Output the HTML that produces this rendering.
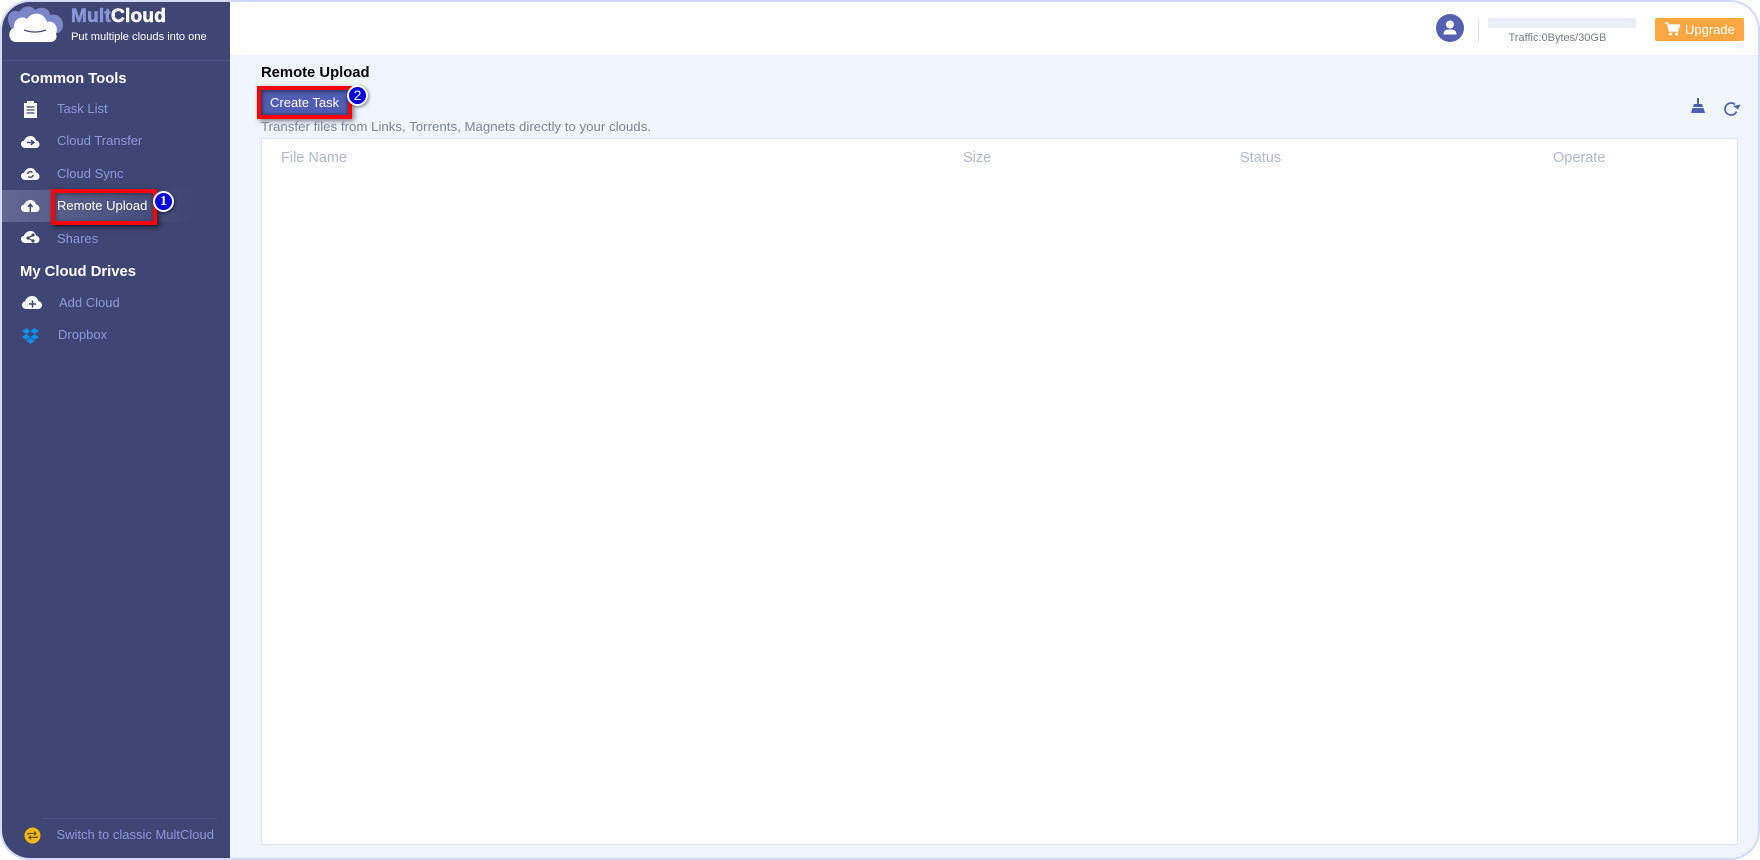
<!DOCTYPE html>
<html><head><meta charset="utf-8"><style>
html,body{margin:0;padding:0;width:1760px;height:860px;overflow:hidden;background:#fff;font-family:"Liberation Sans",sans-serif}
.a{position:absolute;white-space:nowrap}
#f{position:absolute;left:0;top:0;width:1760px;height:860px;overflow:hidden}
#frame{position:absolute;left:0;top:0;width:1756px;height:856px;border:2px solid #d3daf8;border-radius:30px;overflow:hidden;background:#f0f5fe}
.nav{font-size:13px;color:#8d97d8;line-height:16px}
.hd{font-size:14.800px;font-weight:bold;color:#fff;line-height:18px}
.th{font-size:14.500px;color:#b2b9cb;line-height:18px}
svg{position:absolute;display:block}
</style></head><body><div id="f">
<div id="frame">
<div class="a" style="left:0;top:0;width:228px;height:856px;background:#3f4674"></div>
<div class="a" style="left:228px;top:0;width:1530px;height:53px;background:#fff"></div>
<div class="a" style="left:0;top:58px;width:228px;height:1px;background:#4a5285"></div>
<div class="a" style="left:0;top:188px;width:228px;height:32px;background:linear-gradient(90deg,#626892,#3f4674 85%)"></div>
<div class="a" style="left:40px;top:816px;width:175px;height:1px;background:#4a5285"></div>
<div class="a" style="left:259px;top:136px;width:1475px;height:705px;background:#fff;border:1px solid #dbe5f7"></div>
</div>
<!-- logo -->
<svg style="left:6px;top:4px" width="60" height="40" viewBox="0 0 60 40"><path d="M2 15C2 8 9 5 13 8C17 1 26 1 29 6C36 1 44 5 44 11C51 9 57 14 57 21C57 26 54 29 51 29L10 29C6 26 2 21 2 15Z" fill="#7b86c9"/><path d="M10 38C2 38 1 26 8 24C7 15 16 11 21 15C26 7 38 8 41 18C48 16 53 23 50 30C52 35 48 38 44 38Z" fill="#fff"/><path d="M18 26Q29 30 40 26" stroke="#3f4674" stroke-width="1.200" fill="none"/></svg>
<div class="a" style="left:71px;top:5px;font-size:19px;font-weight:bold;line-height:24px;letter-spacing:.25px;color:#8a94d6;-webkit-text-stroke:.6px #8a94d6">Mult<span style="color:#fff;-webkit-text-stroke:.6px #fff">Cloud</span></div>
<div class="a" style="left:71px;top:29.500px;font-size:11.100px;color:#fff;line-height:15px">Put multiple clouds into one</div>
<!-- nav -->
<div class="a hd" style="left:20px;top:70px">Common Tools</div>
<svg style="left:23px;top:101px" width="15" height="17" viewBox="0 0 15 17"><path d="M1 2h3V0h7v2h3v15H1z" fill="#fff"/><path d="M3.500 6h8M3.500 9h8M3.500 12h8" stroke="#3f4674" stroke-width="1.200"/></svg>
<div class="a nav" style="left:57px;top:101px">Task List</div>
<svg style="left:21px;top:136px" width="19" height="12" viewBox="0 0 19 12"><path d="M4.500 12C1.500 12 0 10 0 8C0 6 1.500 5 3 4.800C4 2 6.500 0 9.500 0C12.500 0 14.500 2 15 4.500C17 5 18.500 6.500 18.500 8.500C18.500 10.500 17 12 15 12Z" fill="#fff"/><path d="M6 6.500h6M10 4.200l2.800 2.300-2.800 2.300" stroke="#3f4674" stroke-width="1.500" fill="none"/></svg>
<div class="a nav" style="left:57px;top:133px">Cloud Transfer</div>
<svg style="left:21px;top:168px" width="19" height="12" viewBox="0 0 19 12"><path d="M4.500 12C1.500 12 0 10 0 8C0 6 1.500 5 3 4.800C4 2 6.500 0 9.500 0C12.500 0 14.500 2 15 4.500C17 5 18.500 6.500 18.500 8.500C18.500 10.500 17 12 15 12Z" fill="#fff"/><path d="M6.500 6a3 3 0 0 1 5-1.500M12.200 7a3 3 0 0 1-5 1.500" stroke="#3f4674" stroke-width="1.500" fill="none"/></svg>
<div class="a nav" style="left:57px;top:166px">Cloud Sync</div>
<svg style="left:21px;top:200px" width="19" height="12" viewBox="0 0 19 12"><path d="M4.500 12C1.500 12 0 10 0 8C0 6 1.500 5 3 4.800C4 2 6.500 0 9.500 0C12.500 0 14.500 2 15 4.500C17 5 18.500 6.500 18.500 8.500C18.500 10.500 17 12 15 12Z" fill="#fff"/><path d="M9.300 12V5M7 7l2.300-2.800L11.600 7" stroke="#3f4674" stroke-width="1.500" fill="none"/></svg>
<div class="a nav" style="left:57px;top:198px;color:#fff">Remote Upload</div>
<svg style="left:21px;top:231px" width="19" height="12" viewBox="0 0 19 12"><path d="M4.500 12C1.500 12 0 10 0 8C0 6 1.500 5 3 4.800C4 2 6.500 0 9.500 0C12.500 0 14.500 2 15 4.500C17 5 18.500 6.500 18.500 8.500C18.500 10.500 17 12 15 12Z" fill="#fff"/><path d="M12 4L7 7l5 3" stroke="#3f4674" stroke-width="1.200" fill="none"/><circle cx="7" cy="7" r="1.600" fill="#3f4674"/><circle cx="12" cy="4" r="1.600" fill="#3f4674"/><circle cx="12" cy="10" r="1.600" fill="#3f4674"/></svg>
<div class="a nav" style="left:57px;top:230.500px">Shares</div>
<div class="a hd" style="left:20px;top:262.500px">My Cloud Drives</div>
<svg style="left:22px;top:296px" width="20" height="13" viewBox="0 0 20 13"><path d="M4.500 13C1.500 13 0 11 0 9C0 6.800 1.500 5.500 3.200 5.200C4 2 7 0 10 0C13.500 0 15.800 2.200 16.300 5C18.500 5.500 20 7 20 9C20 11 18.500 13 16 13Z" fill="#fff"/><path d="M10.500 4.500v7M7 8h7" stroke="#3f4674" stroke-width="1.600"/></svg>
<div class="a nav" style="left:59px;top:295px">Add Cloud</div>
<svg style="left:22px;top:328px" width="17" height="16" viewBox="0 0 17 16"><path d="M4.500 0L0 3l4.500 3L8.500 3zM12.500 0L8.500 3l4 3L17 3zM0 9l4.500 3 4-3-4-3zM17 9l-4.500 3-4-3 4-3zM4.500 13l4 3 4-3-4-3z" fill="#0f8fec"/></svg>
<div class="a nav" style="left:58px;top:327px">Dropbox</div>
<svg style="left:24px;top:827px" width="17" height="17" viewBox="0 0 17 17"><circle cx="8.500" cy="8.500" r="8" fill="#fbb80c"/><path d="M4 8V6.500h7.500M10 4.500l2 2-2 2M13 9v1.500H5.500M7 8.500l-2 2 2 2" stroke="#5a4a20" stroke-width="1.100" fill="none"/></svg>
<div class="a nav" style="left:56.500px;top:827px">Switch to classic MultCloud</div>
<!-- red box 1 -->
<div class="a" style="left:51px;top:189px;width:98px;height:28px;border:4px solid #f00;box-shadow:2px 2px 5px rgba(0,0,0,.6),inset 1px 1px 4px rgba(0,0,0,.4)"></div>
<div class="a" style="left:153px;top:191px;width:17px;height:17px;border-radius:50%;background:#0000e0;border:2px solid #fff;box-shadow:1px 1px 3px rgba(0,0,0,.5);color:#fff;font:bold 14px/17px 'Liberation Serif',serif;text-align:center">1</div>
<!-- top -->
<div class="a" style="left:261px;top:63.500px;font-size:14.800px;font-weight:bold;color:#000;line-height:18px">Remote Upload</div>
<div class="a" style="left:261px;top:90px;width:87px;height:25px;background:#4f5eb2;box-shadow:inset 0 0 4px rgba(0,0,0,.35)"></div>
<div class="a" style="left:257px;top:86px;width:87px;height:25px;border:4px solid #f00;box-shadow:2px 2px 5px rgba(0,0,0,.5),inset 1px 1px 4px rgba(0,0,0,.4)"></div>
<div class="a" style="left:270px;top:95px;font-size:13px;color:#fff;line-height:15px">Create Task</div>
<div class="a" style="left:347px;top:85px;width:17px;height:17px;border-radius:50%;background:#0000e0;border:2px solid #fff;box-shadow:1px 1px 3px rgba(0,0,0,.5);color:#fff;font:14px/17px 'Liberation Sans',sans-serif;text-align:center">2</div>
<div class="a" style="left:261px;top:119px;font-size:13.270px;color:#7e8795;line-height:15px">Transfer files from Links, Torrents, Magnets directly to your clouds.</div>
<div class="a th" style="left:281px;top:149px">File Name</div>
<div class="a th" style="left:963px;top:149px">Size</div>
<div class="a th" style="left:1240px;top:149px">Status</div>
<div class="a th" style="left:1553px;top:149px">Operate</div>
<!-- header right -->
<svg style="left:1436px;top:14px" width="28" height="28" viewBox="0 0 28 28"><circle cx="14" cy="14" r="14" fill="#5561b0"/><circle cx="14" cy="10.500" r="4" fill="#fff"/><path d="M7.500 20.500C7.500 16 10.500 15.500 14 15.500S20.500 16 20.500 20.500Z" fill="#fff"/></svg>
<div class="a" style="left:1478px;top:18px;width:1px;height:26px;background:#e6eaf4"></div>
<div class="a" style="left:1488px;top:18px;width:148px;height:10px;background:#eaedf6"></div>
<div class="a" style="left:1508.500px;top:31px;font-size:11px;color:#787f8c;line-height:14px">Traffic:0Bytes/30GB</div>
<div class="a" style="left:1655px;top:18px;width:89px;height:23px;background:#ffa742;border-radius:2px"></div>
<svg style="left:1665px;top:22px" width="15" height="14" viewBox="0 0 15 14"><path d="M0 1h2.500l2 8h8l2-6H4" stroke="#fff" stroke-width="1.600" fill="#fff"/><circle cx="5.500" cy="12" r="1.500" fill="#fff"/><circle cx="11.500" cy="12" r="1.500" fill="#fff"/></svg>
<div class="a" style="left:1685px;top:22px;font-size:13px;color:#fff;line-height:15px">Upgrade</div>
<svg style="left:1691px;top:98px" width="14" height="16" viewBox="0 0 14 16"><path d="M6 0h2v6h3l1 3H2l1-3h3zM1.500 10h11l1.500 5H0z" fill="#5060b5"/></svg>
<svg style="left:1722.500px;top:101px" width="18" height="15" viewBox="0 0 18 15"><path d="M13.500 10.500A6 6 0 1 1 12 3.500" stroke="#5060b5" stroke-width="1.700" fill="none"/><path d="M17.500 3.500L15 8.500l-5-3.500z" fill="#5060b5"/></svg>
</div></body></html>
